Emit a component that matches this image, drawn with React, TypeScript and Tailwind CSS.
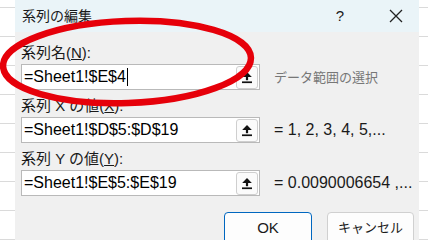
import React from "react";

const font = { fontFamily: '"Liberation Sans", "Noto Sans CJK JP", sans-serif' };

function GridStrip({ width }: { width: string }) {
  return (
    <div className={`${width} flex shrink-0 flex-col bg-white`}>
      <div className="h-[27px] border-b border-[#dadada]" />
      {[0, 1, 2, 3, 4, 5, 6, 7].map((i) => (
        <div key={i} className="h-[29px] shrink-0 border-b border-[#dadada]" />
      ))}
    </div>
  );
}

function RefButton() {
  return (
    <div className="flex h-[23px] w-[22px] items-center justify-center rounded-[3px] border border-[#cfcfcf] bg-[#fbfbfb]">
      <svg width="12" height="13" viewBox="0 0 12 13">
        <polygon points="6,1 10.8,6 1.2,6" fill="#111" />
        <rect x="4.9" y="5" width="2.2" height="4.2" fill="#111" />
        <rect x="1" y="10.4" width="10" height="1.7" fill="#111" />
      </svg>
    </div>
  );
}

function Field({ value, hint, caret }: { value: string; hint: React.ReactNode; caret?: boolean }) {
  return (
    <div className="flex items-center">
      <div className="flex h-[26px] w-[239px] items-center justify-between border border-[#b9b9b9] bg-white pl-[2px] pr-[1px]">
        <div className="flex items-center">
          <span className="text-[16px] leading-none text-black">{value}</span>
          {caret && <span className="ml-[1px] h-[18px] w-px bg-black" />}
        </div>
        <RefButton />
      </div>
      <div className="ml-[14px] whitespace-nowrap leading-none">{hint}</div>
    </div>
  );
}

function Label({ children }: { children: React.ReactNode }) {
  return <div className="flex h-[20px] items-center text-[15px] leading-none text-[#1a1a1a]">{children}</div>;
}

export default function App() {
  return (
    <div className="relative flex h-[240px] w-[428px] overflow-hidden bg-white" style={font}>
      <GridStrip width="w-[15px]" />

      <div className="flex w-[404px] shrink-0 flex-col">
        <div className="flex h-[32px] shrink-0 items-center bg-[#eaf4f8] pl-[7px]">
          <span className="text-[14px] text-[#1a1a1a]">系列の編集</span>
          <span className="ml-auto mr-[45px] text-[15px] text-[#1a1a1a]">?</span>
          <svg className="mr-[16px]" width="14" height="14" viewBox="0 0 14 14">
            <path d="M1 1 L13 13 M13 1 L1 13" stroke="#222" strokeWidth="1.3" />
          </svg>
        </div>

        <div className="flex flex-1 flex-col bg-[#f0f0f0] pl-[6px] pr-[5px] pt-[10px]">
          <Label>
            系列名(<span className="underline">N</span>):
          </Label>
          <div className="mt-[2px]">
            <Field
              value="=Sheet1!$E$4"
              caret
              hint={<span className="text-[13px] text-[#777777]">データ範囲の選択</span>}
            />
          </div>

          <div className="mt-[5px]">
            <Label>
              系列 X の値(<span className="underline">X</span>):
            </Label>
          </div>
          <div className="mt-[2px]">
            <Field
              value="=Sheet1!$D$5:$D$19"
              hint={<span className="text-[16px] text-[#1a1a1a]">= 1, 2, 3, 4, 5,...</span>}
            />
          </div>

          <div className="mt-[5px]">
            <Label>
              系列 Y の値(<span className="underline">Y</span>):
            </Label>
          </div>
          <div className="mt-[2px]">
            <Field
              value="=Sheet1!$E$5:$E$19"
              hint={<span className="text-[16px] text-[#1a1a1a]">= 0.0090006654 ,...</span>}
            />
          </div>

          <div className="mt-[16px] flex justify-end gap-[15px]">
            <button className="flex h-[32px] w-[88px] items-center justify-center rounded-[4px] border border-[#0067c0] bg-[#fdfdfd] text-[15px] text-[#1a1a1a]">
              OK
            </button>
            <button className="flex h-[32px] w-[87px] items-center justify-center rounded-[4px] border border-[#d0d0d0] bg-[#fdfdfd] text-[13px] text-[#1a1a1a]">
              キャンセル
            </button>
          </div>
        </div>
      </div>

      <GridStrip width="w-[9px]" />

      <svg className="pointer-events-none absolute left-0 top-0" width="428" height="240" viewBox="0 0 428 240">
        <ellipse
          cx="127"
          cy="62"
          rx="124"
          ry="41"
          transform="rotate(-2 127 62)"
          fill="none"
          stroke="#e6000a"
          strokeWidth="6.5"
        />
      </svg>
    </div>
  );
}
